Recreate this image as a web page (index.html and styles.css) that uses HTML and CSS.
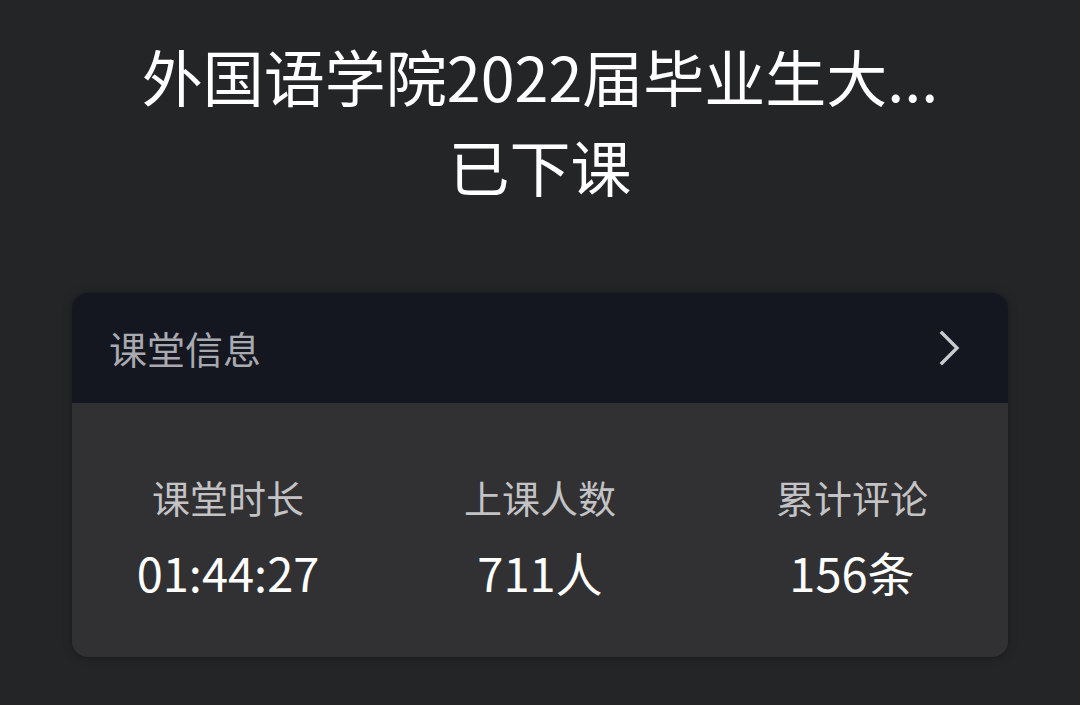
FILE: index.html
```html
<!DOCTYPE html>
<html lang="zh-CN">
<head>
<meta charset="utf-8">
<link rel="stylesheet" href="styles.css">
</head>
<body>
<div class="page">
  <header class="title">
    <div class="title-line">外国语学院2022届毕业生大...</div>
    <div class="title-line">已下课</div>
  </header>
  <section class="card">
    <div class="card-head">
      <span class="card-head-text">课堂信息</span>
      <svg class="chevron" width="24" height="36" viewBox="0 0 24 36" aria-hidden="true">
        <path d="M4 3 L19 18 L4 33" fill="none" stroke="#c9cacd" stroke-width="3.4" stroke-linecap="square" stroke-linejoin="miter"/>
      </svg>
    </div>
    <div class="card-body">
      <div class="stat">
        <div class="stat-label">课堂时长</div>
        <div class="stat-value">01:44:27</div>
      </div>
      <div class="stat">
        <div class="stat-label">上课人数</div>
        <div class="stat-value">711人</div>
      </div>
      <div class="stat">
        <div class="stat-label">累计评论</div>
        <div class="stat-value">156条</div>
      </div>
    </div>
  </section>
</div>
</body>
</html>
```

FILE: styles.css
```css
html, body {
  margin: 0;
  padding: 0;
  background: #232527;
}
body {
  font-family: "Noto Sans CJK SC", "Noto Sans", sans-serif;
  color: #ffffff;
  width: 1080px;
  height: 705px;
  overflow: hidden;
}
.page {
  display: flex;
  flex-direction: column;
  padding-top: 31px;
}
.title {
  display: flex;
  flex-direction: column;
  align-items: center;
}
.title-line {
  font-size: 61px;
  line-height: 90px;
  color: #ffffff;
  white-space: nowrap;
}
.card {
  margin: 82px 72px 0 72px;
  border-radius: 16px;
  overflow: hidden;
  box-shadow: 0 0 8px rgba(0, 0, 0, 0.35);
}
.card-head {
  height: 110px;
  background: #141620;
  display: flex;
  align-items: center;
  justify-content: space-between;
  padding: 0 46px 0 37px;
}
.card-head-text {
  font-size: 38px;
  color: #a9aab0;
  line-height: 1;
}
.chevron {
  display: block;
}
.card-body {
  height: 254px;
  box-sizing: border-box;
  background: #313133;
  display: grid;
  grid-template-columns: repeat(3, 1fr);
  padding-top: 69px;
}
.stat {
  display: flex;
  flex-direction: column;
  align-items: center;
}
.stat-label {
  font-size: 38px;
  line-height: 50px;
  color: #c3c3c5;
}
.stat-value {
  margin-top: 22px;
  font-size: 47px;
  line-height: 56px;
  color: #ffffff;
}
```
